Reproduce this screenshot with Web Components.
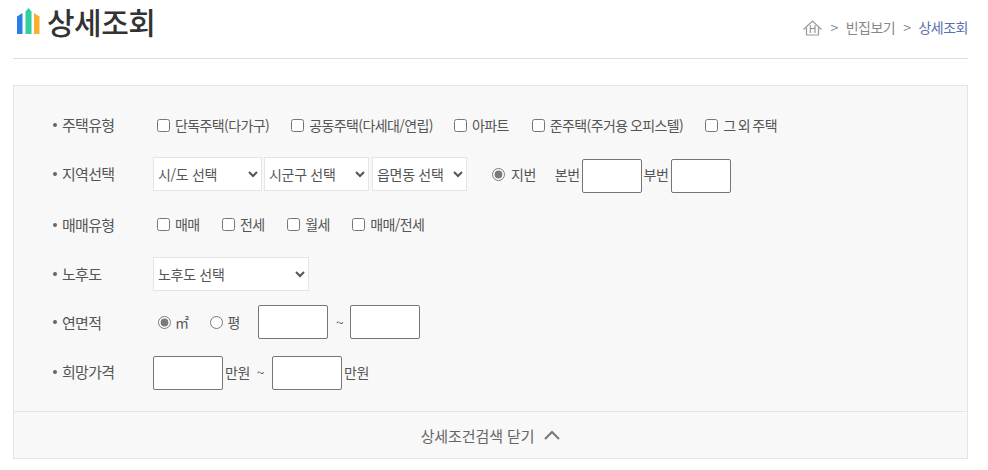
<!DOCTYPE html>
<html lang="ko">
  <head>
    <meta charset="UTF-8" />
    <title>상세조회</title>
    <style>
      body {
        margin: 0;
        background: #fff;
        color: #555;
        font-family: "Noto Sans CJK KR", "Noto Sans", sans-serif;
        font-size: 14px;
      }
      .t { letter-spacing: -0.5px; }
    </style>
  </head>
  <body>
    <detail-page>
      <page-header slot="header"></page-header>
      <search-row label="주택유형" style="height: 50px">
        <form-check style="margin-left: 4px; margin-right: 22px">단독주택(다가구)</form-check>
        <form-check style="margin-right: 21px">공동주택(다세대/연립)</form-check>
        <form-check style="margin-right: 23px">아파트</form-check>
        <form-check style="margin-right: 22px">준주택(주거용 오피스텔)</form-check>
        <form-check>그 외 주택</form-check>
      </search-row>
      <search-row label="지역선택" style="height: 48px">
        <form-select width="109" style="margin-right: 2px">시/도 선택</form-select>
        <form-select width="105" style="margin-right: 3px">시군구 선택</form-select>
        <form-select width="95" style="margin-right: 25px">읍면동 선택</form-select>
        <form-radio checked style="--gap: 6px; margin-right: 19px">지번</form-radio>
        <span class="t">본번</span>
        <form-input width="60" style="margin: 3px 2px 0 2px"></form-input>
        <span class="t">부번</span>
        <form-input width="60" style="margin: 3px 0 0 3px"></form-input>
      </search-row>
      <search-row label="매매유형" style="height: 54px">
        <form-check style="margin: -2px 22.5px 0 4px">매매</form-check>
        <form-check style="margin: -2px 22.5px 0 0">전세</form-check>
        <form-check style="margin: -2px 22.5px 0 0">월세</form-check>
        <form-check style="margin-top: -2px">매매/전세</form-check>
      </search-row>
      <search-row label="노후도" style="height: 44px">
        <form-select width="156">노후도 선택</form-select>
      </search-row>
      <search-row label="연면적" style="height: 52px; --label-y: 0px">
        <form-radio checked style="--gap: 4px; margin-left: 5px; margin-right: 21px">㎡</form-radio>
        <form-radio style="margin-right: 18px">평</form-radio>
        <form-input width="70" style="margin-right: 8px"></form-input>
        <span class="t">~</span>
        <form-input width="70" style="margin-left: 7px"></form-input>
      </search-row>
      <search-row label="희망가격" style="height: 50px; --label-y: -3px">
        <form-input width="70" style="margin-right: 2px"></form-input>
        <span class="t" style="margin-top: -3px">만원</span>
        <span class="t" style="margin: -3px 7px 0">~</span>
        <form-input width="70" style="margin: 0 2px 0 1px"></form-input>
        <span class="t" style="margin-top: -3px">만원</span>
      </search-row>
    </detail-page>

    <script>
      // Page frame: header on top, grey search panel with a closing bar
      class DetailPage extends HTMLElement {
        constructor() {
          super();
          const shadow = this.attachShadow({ mode: "open" });
          shadow.innerHTML = `
          <style>
            :host { display: block; width: 955px; margin: 0 0 0 13px; }
            .panel {
              margin-top: 26px;
              height: 374px;
              box-sizing: border-box;
              border: 1px solid #e5e5e5;
              background: #f8f8f8;
              display: flex;
              flex-direction: column;
            }
            .rows { flex: 1; padding: 14px 0 0 38px; }
            .close {
              height: 46px;
              border-top: 1px solid #e5e5e5;
              display: flex;
              justify-content: center;
              align-items: center;
              gap: 10px;
              font-size: 15px;
              letter-spacing: -0.1px;
              color: #666;
            }
            svg { display: block; }
          </style>
          <slot name="header"></slot>
          <div class="panel">
            <div class="rows"><slot></slot></div>
            <div class="close">
              <span>상세조건검색 닫기</span>
              <svg width="16" height="10" viewBox="0 0 16 10" fill="none" stroke="#777" stroke-width="2">
                <path d="M1 9 L8 2 L15 9" />
              </svg>
            </div>
          </div>`;
        }
      }

      class PageHeader extends HTMLElement {
        constructor() {
          super();
          const shadow = this.attachShadow({ mode: "open" });
          shadow.innerHTML = `
          <style>
            :host {
              display: flex;
              justify-content: space-between;
              align-items: flex-start;
              height: 58px;
              border-bottom: 1px solid #ddd;
            }
            .title { display: flex; align-items: center; gap: 7px; margin: 0 0 0 4px; height: 44px; }
            h1 { margin: -3px 0 0; font-size: 30px; font-weight: 500; color: #333; line-height: 44px; letter-spacing: -0.5px; }
            .crumbs {
              display: flex;
              align-items: center;
              margin-top: 17px;
              height: 20px;
              font-size: 14px;
              letter-spacing: -0.5px;
              color: #888;
            }
            .crumbs b { font-weight: 400; color: #5a6fb0; }
            .sep { margin: 0 8px 0 8px; }
            text { font: 10px "Liberation Sans", sans-serif; fill: #888; letter-spacing: 0; }
          </style>
          <div class="title">
            <svg width="23" height="27" viewBox="0 0 23 27" style="margin-top: -1px">
              <path d="M0 8.5 L5.5 5 V26 H0 Z" fill="#2b7de9" />
              <path d="M8.5 3.5 L11.5 0 L14.5 3.5 V26 H8.5 Z" fill="#2fcf9f" />
              <path d="M17 5 L22.5 8.5 V26 H17 Z" fill="#fbb02d" />
            </svg>
            <h1>상세조회</h1>
          </div>
          <div class="crumbs">
            <svg width="19" height="16" viewBox="0 0 19 16" fill="none" stroke="#999" stroke-width="1.2" style="margin-top: 1px">
              <path d="M0.5 9.5 L9.5 1 L18.5 9.5" />
              <path d="M3.5 7.5 V15 H15.5 V7.5" />
              <text x="9.5" y="13" text-anchor="middle" stroke="none">H</text>
            </svg>
            <span class="sep">&gt;</span><span>빈집보기</span><span class="sep">&gt;</span><b>상세조회</b>
          </div>`;
        }
      }

      // One labelled line of the form, controls go in the slot
      class SearchRow extends HTMLElement {
        constructor() {
          super();
          const shadow = this.attachShadow({ mode: "open" });
          shadow.innerHTML = `
          <style>
            :host { display: flex; align-items: center; }
            .label { width: 101px; flex: none; font-size: 15px; letter-spacing: -0.7px; color: #555; display: flex; align-items: center; gap: 6px; margin-top: var(--label-y, -1px); }
            .label i { width: 4px; height: 4px; border-radius: 50%; background: #666; margin-left: 1px; margin-right: -1px; }
          </style>
          <div class="label"><i></i><span></span></div>
          <slot></slot>`;
          shadow.querySelector("span").textContent = this.getAttribute("label");
        }
      }

      class FormCheck extends HTMLElement {
        constructor() {
          super();
          const shadow = this.attachShadow({ mode: "open" });
          shadow.innerHTML = `
          <style>
            :host { display: inline-flex; align-items: center; gap: 5px; font-size: 14px; letter-spacing: -0.6px; word-spacing: -1px; color: #555; }
            input { margin: 0; width: 13px; height: 13px; }
          </style>
          <input type="checkbox" /><slot></slot>`;
        }
      }

      class FormRadio extends HTMLElement {
        constructor() {
          super();
          const shadow = this.attachShadow({ mode: "open" });
          shadow.innerHTML = `
          <style>
            :host { display: inline-flex; align-items: center; gap: var(--gap, 5px); font-size: 14px; letter-spacing: -0.5px; color: #555; }
            input { margin: 0; width: 13px; height: 13px; accent-color: #7a7a7a; }
          </style>
          <input type="radio" /><slot></slot>`;
          shadow.querySelector("input").checked = this.hasAttribute("checked");
        }
      }

      class FormSelect extends HTMLElement {
        constructor() {
          super();
          const shadow = this.attachShadow({ mode: "open" });
          shadow.innerHTML = `
          <style>
            :host { display: inline-block; }
            select {
              display: block;
              height: 34px;
              box-sizing: border-box;
              border: 1px solid #e5e5e5;
              border-radius: 0;
              outline: none;
              background-color: #fff;
              padding: 0;
              font: 14px "Noto Sans CJK KR", sans-serif;
              letter-spacing: -0.3px;
              color: #555;
            }
          </style>
          <select><option></option></select>`;
          const sel = shadow.querySelector("select");
          sel.style.width = this.getAttribute("width") + "px";
          sel.options[0].textContent = this.textContent;
        }
      }

      class FormInput extends HTMLElement {
        constructor() {
          super();
          const shadow = this.attachShadow({ mode: "open" });
          shadow.innerHTML = `
          <style>
            :host { display: inline-block; }
            input {
              display: block;
              height: 34px;
              box-sizing: border-box;
              border: 1px solid #767676;
              border-radius: 2px;
              background: #fff;
              padding: 0;
            }
          </style>
          <input type="text" />`;
          shadow.querySelector("input").style.width = this.getAttribute("width") + "px";
        }
      }

      customElements.define("page-header", PageHeader);
      customElements.define("search-row", SearchRow);
      customElements.define("form-check", FormCheck);
      customElements.define("form-radio", FormRadio);
      customElements.define("form-select", FormSelect);
      customElements.define("form-input", FormInput);
      customElements.define("detail-page", DetailPage);
    </script>
  </body>
</html>
